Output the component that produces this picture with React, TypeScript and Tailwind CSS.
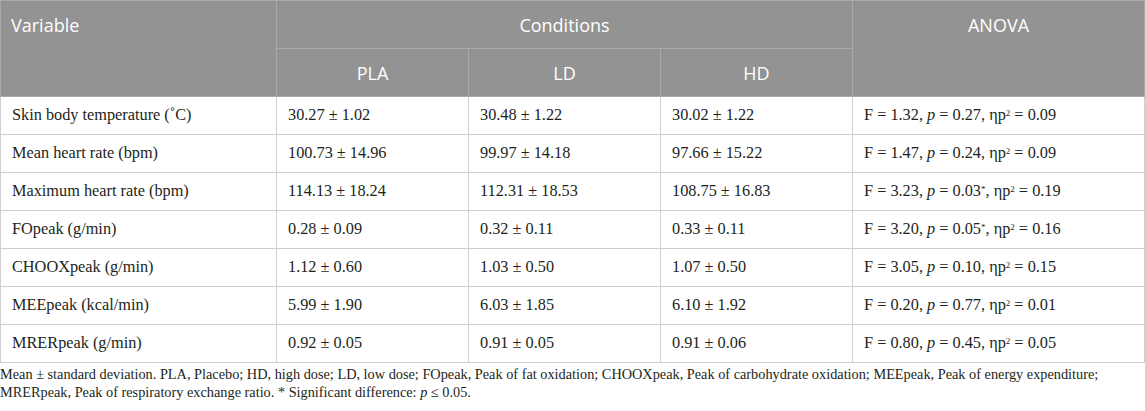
import React from "react";

type Row = {
  label: string;
  pla: string;
  ld: string;
  hd: string;
  f: string;
  p: string;
  star?: boolean;
  eta: string;
};

const rows: Row[] = [
  { label: "Skin body temperature (˚C)", pla: "30.27 ± 1.02", ld: "30.48 ± 1.22", hd: "30.02 ± 1.22", f: "1.32", p: "0.27", eta: "0.09" },
  { label: "Mean heart rate (bpm)", pla: "100.73 ± 14.96", ld: "99.97 ± 14.18", hd: "97.66 ± 15.22", f: "1.47", p: "0.24", eta: "0.09" },
  { label: "Maximum heart rate (bpm)", pla: "114.13 ± 18.24", ld: "112.31 ± 18.53", hd: "108.75 ± 16.83", f: "3.23", p: "0.03", star: true, eta: "0.19" },
  { label: "FOpeak (g/min)", pla: "0.28 ± 0.09", ld: "0.32 ± 0.11", hd: "0.33 ± 0.11", f: "3.20", p: "0.05", star: true, eta: "0.16" },
  { label: "CHOOXpeak (g/min)", pla: "1.12 ± 0.60", ld: "1.03 ± 0.50", hd: "1.07 ± 0.50", f: "3.05", p: "0.10", eta: "0.15" },
  { label: "MEEpeak (kcal/min)", pla: "5.99 ± 1.90", ld: "6.03 ± 1.85", hd: "6.10 ± 1.92", f: "0.20", p: "0.77", eta: "0.01" },
  { label: "MRERpeak (g/min)", pla: "0.92 ± 0.05", ld: "0.91 ± 0.05", hd: "0.91 ± 0.06", f: "0.80", p: "0.45", eta: "0.05" },
];

const head = "border border-[#a9a9a9] bg-[#939393] text-white font-normal align-top text-[18px] leading-[24px]";
const cell = "border border-[#cfcfcf] px-[11px] h-[38px] align-middle text-left";

export default function App() {
  return (
    <div className="w-[1145px] bg-white text-[#231f20] font-['Liberation_Serif',serif]">
      <table className="border-collapse table-fixed w-[1144px]">
        <colgroup>
          <col className="w-[276px]" />
          <col className="w-[192px]" />
          <col className="w-[192px]" />
          <col className="w-[192px]" />
          <col className="w-[292px]" />
        </colgroup>
        <thead className="font-['Open_Sans',sans-serif]">
          <tr className="h-[48px]">
            <th rowSpan={2} className={`${head} text-left px-[10px] pt-[12px]`}>Variable</th>
            <th colSpan={3} className={`${head} text-center pt-[12px]`}>Conditions</th>
            <th rowSpan={2} className={`${head} text-center pt-[12px]`}>ANOVA</th>
          </tr>
          <tr className="h-[48px]">
            <th className={`${head} text-center pt-[12px]`}>PLA</th>
            <th className={`${head} text-center pt-[12px]`}>LD</th>
            <th className={`${head} text-center pt-[12px]`}>HD</th>
          </tr>
        </thead>
        <tbody className="text-[16.3px]">
          {rows.map((r) => (
            <tr key={r.label}>
              <td className={cell}>{r.label}</td>
              <td className={cell}>{r.pla}</td>
              <td className={cell}>{r.ld}</td>
              <td className={cell}>{r.hd}</td>
              <td className={cell}>
                F = {r.f}, <i>p</i> = {r.p}
                {r.star && <sup className="text-[9px]">*</sup>}, ηp<sup className="text-[9px]">2</sup> = {r.eta}
              </td>
            </tr>
          ))}
        </tbody>
      </table>
      <p className="text-[14.3px] leading-[18px] pt-[2px] whitespace-nowrap">
        Mean ± standard deviation. PLA, Placebo; HD, high dose; LD, low dose; FOpeak, Peak of fat oxidation; CHOOXpeak, Peak of carbohydrate oxidation; MEEpeak, Peak of energy expenditure;
        <br />
        MRERpeak, Peak of respiratory exchange ratio. * Significant difference: <i>p</i> ≤ 0.05.
      </p>
    </div>
  );
}
